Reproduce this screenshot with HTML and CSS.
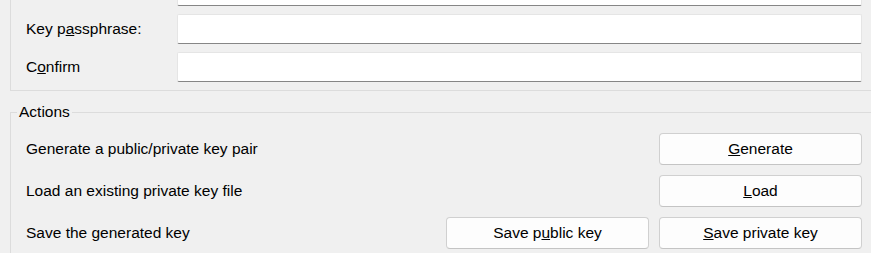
FILE: index.html
```html
<!DOCTYPE html>
<html>
<head>
<meta charset="utf-8">
<link rel="stylesheet" href="styles.css">
</head>
<body>
<div class="page">
  <div class="group params">
    <div class="field-row">
      <span class="label">Key c<u>o</u>mment:</span>
      <div class="field"></div>
    </div>
    <div class="field-row">
      <span class="label">Key p<u>a</u>ssphrase:</span>
      <div class="field"></div>
    </div>
    <div class="field-row">
      <span class="label">C<u>o</u>nfirm</span>
      <div class="field"></div>
    </div>
  </div>
  <fieldset class="group actions">
    <legend>Actions</legend>
    <div class="action-grid">
      <span class="label">Generate a public/private key pair</span>
      <button class="btn col3"><u>G</u>enerate</button>
      <span class="label">Load an existing private key file</span>
      <button class="btn col3"><u>L</u>oad</button>
      <span class="label">Save the generated key</span>
      <button class="btn col2">Save p<u>u</u>blic key</button>
      <button class="btn col3"><u>S</u>ave private key</button>
    </div>
  </fieldset>
</div>
</body>
</html>
```
FILE: styles.css
```css
html, body {
  margin: 0;
  padding: 0;
  background: #f0f0f0;
  overflow: hidden;
}
body {
  width: 871px;
  height: 253px;
  font-family: "Liberation Sans", Arial, sans-serif;
  font-size: 15.5px;
  color: #000;
}
.page {
  display: flex;
  flex-direction: column;
}
.group {
  margin: 0 -10px 0 10px;
  border: 1px solid #dcdcdc;
  padding: 0 18px 0 15px;
  min-width: 0;
}
.params {
  margin-top: -33px;
  padding-top: 8px;
  padding-bottom: 8px;
  display: flex;
  flex-direction: column;
  gap: 8px;
}
.field-row {
  display: grid;
  grid-template-columns: 151px 1fr;
  align-items: center;
  height: 30px;
}
.field {
  height: 28px;
  background: #ffffff;
  border: 1px solid #e5e5e5;
  border-bottom-color: #868686;
  border-radius: 2px;
}
.actions {
  margin-top: 11px;
  padding-top: 11px;
  padding-bottom: 20px;
}
.actions legend {
  padding: 0 2px;
  margin-left: -9px;
  line-height: 20px;
}
.action-grid {
  display: grid;
  grid-template-columns: 1fr 203px 203px;
  grid-template-rows: 32px 32px 32px;
  column-gap: 10px;
  row-gap: 10px;
  align-items: center;
}
.action-grid .label {
  grid-column: 1;
}
.btn {
  font: inherit;
  color: #000;
  height: 32px;
  margin: 0;
  padding: 0;
  background: #fdfdfd;
  border: 1px solid #d0d0d0;
  border-bottom-color: #c4c4c4;
  border-radius: 4px;
}
.col2 { grid-column: 2; }
.col3 { grid-column: 3; }
```
